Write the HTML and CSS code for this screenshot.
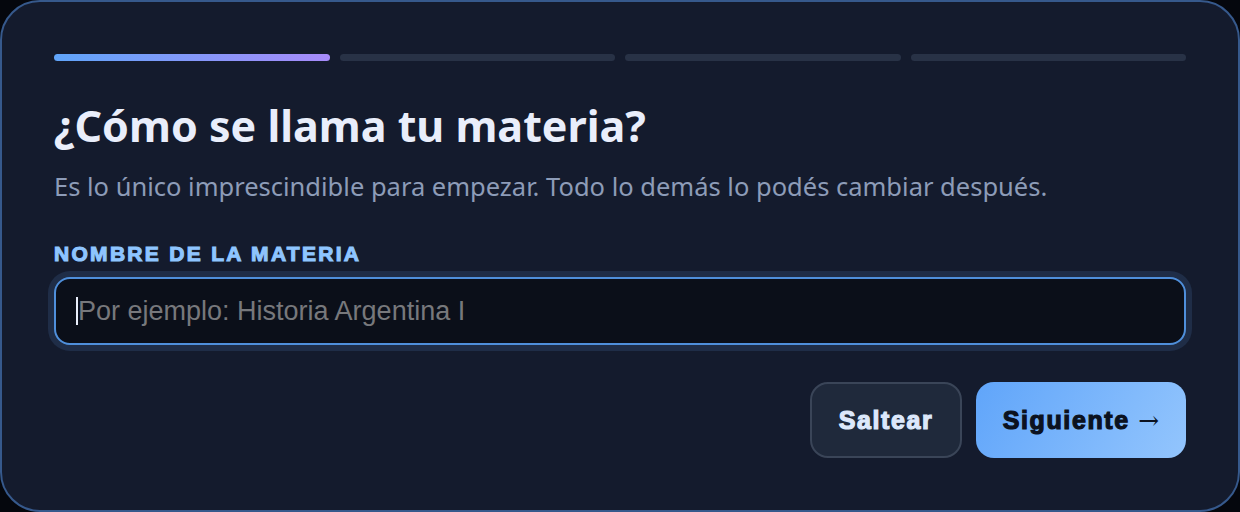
FILE: index.html
```html
<!DOCTYPE html>
<html lang="es">
<head>
    <meta charset="UTF-8">
    <meta name="viewport" content="width=device-width, initial-scale=1.0">
    <title>Nueva materia</title>
    <link rel="stylesheet" href="styles.css">
</head>
<body>
    <div class="card">
        <div class="steps">
            <div class="step active"></div>
            <div class="step"></div>
            <div class="step"></div>
            <div class="step"></div>
        </div>
        <h1>¿Cómo se llama tu materia?</h1>
        <p class="subtitle">Es lo único imprescindible para empezar. Todo lo demás lo podés cambiar después.</p>
        <label for="subject" class="field-label">Nombre de la materia</label>
        <div class="input-wrap">
            <input type="text" id="subject" placeholder="Por ejemplo: Historia Argentina I" autocomplete="off">
            <span class="caret"></span>
        </div>
        <div class="actions">
            <button class="btn btn-ghost">Saltear</button>
            <button class="btn btn-primary">Siguiente <span class="arrow">→</span></button>
        </div>
    </div>
</body>
</html>
```

FILE: styles.css
```css
body {
    margin: 0;
    background: #05070d;
    font-family: 'Noto Sans', 'Open Sans', sans-serif;
}

.card {
    width: 1240px;
    height: 512px;
    box-sizing: border-box;
    background-color: #141b2d;
    border: 2px solid #36598c;
    border-radius: 40px;
    padding: 52px 52px 0 52px;
}

.steps {
    display: flex;
    gap: 10px;
}

.step {
    flex: 1;
    height: 7px;
    border-radius: 4px;
    background-color: #283246;
}

.step.active {
    background: linear-gradient(90deg, #60a5fa 0%, #a78bfa 100%);
}

h1 {
    margin: 39px 0 0 0;
    font-size: 43px;
    font-weight: 700;
    line-height: 52px;
    color: #e9eefb;
}

.subtitle {
    margin: 19px 0 0 0;
    font-size: 25.5px;
    line-height: 30px;
    color: #8d9cb8;
}

.field-label {
    display: block;
    margin-top: 41px;
    font-family: 'Liberation Sans', Arial, sans-serif;
    font-weight: 700;
    font-size: 21px;
    line-height: 24px;
    letter-spacing: 2.3px;
    text-transform: uppercase;
    color: #8ec5ff;
    -webkit-text-stroke: 1.1px #8ec5ff;
}

.input-wrap {
    position: relative;
    margin-top: 11px;
}

.input-wrap input {
    display: block;
    width: 100%;
    height: 68px;
    box-sizing: border-box;
    padding: 0 22px;
    background-color: #0b0f19;
    border: 2px solid #4f8fdb;
    border-radius: 16px;
    box-shadow: 0 0 0 6px #1f2d47;
    font-family: 'Liberation Sans', Arial, sans-serif;
    font-size: 27px;
    color: #e9eefb;
    outline: none;
}

.input-wrap input::placeholder {
    color: #77787c;
}

.caret {
    position: absolute;
    left: 22px;
    top: 20px;
    width: 2px;
    height: 28px;
    background-color: #e9eefb;
}

.actions {
    display: flex;
    justify-content: flex-end;
    gap: 14px;
    margin-top: 37px;
}

.btn {
    height: 76px;
    border-radius: 18px;
    font-family: 'Liberation Sans', Arial, sans-serif;
    font-weight: 700;
    font-size: 25px;
    letter-spacing: 1.6px;
    cursor: pointer;
}

.btn-ghost {
    width: 152px;
    background-color: #1f293b;
    border: 2px solid #3a4558;
    color: #dce8fb;
    -webkit-text-stroke: 1.2px #dce8fb;
}

.btn-primary {
    width: 210px;
    border: none;
    background: linear-gradient(120deg, #60a5fa 0%, #93c5fd 100%);
    color: #0b1220;
    -webkit-text-stroke: 1.2px #0b1220;
}

.arrow {
    font-family: 'DejaVu Serif', serif;
    font-weight: 400;
    letter-spacing: 0;
    -webkit-text-stroke: 0;
}
```
